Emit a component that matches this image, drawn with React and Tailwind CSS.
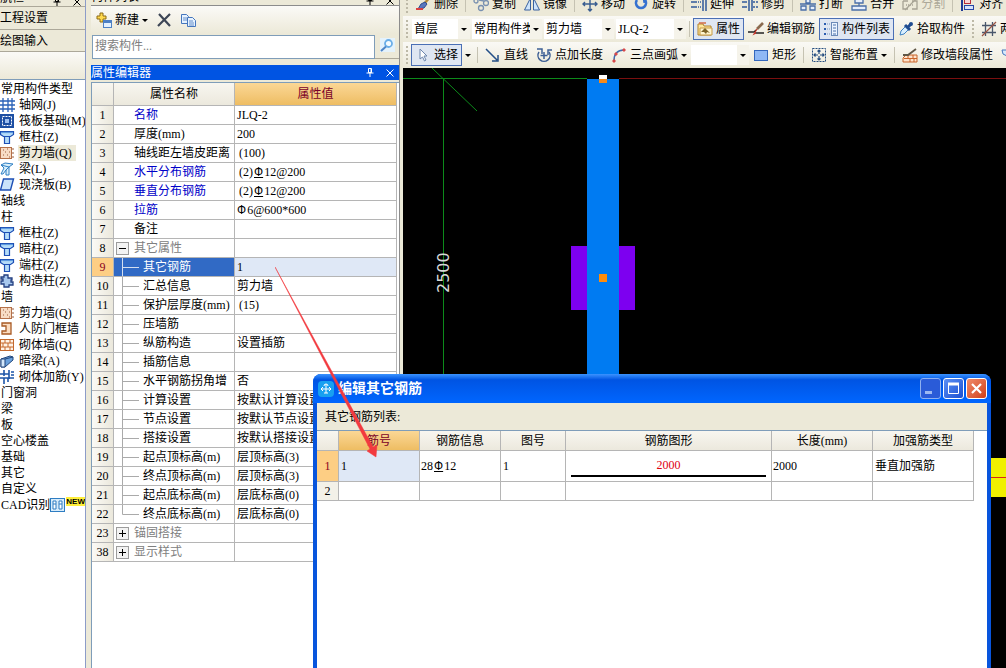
import React, { useState } from "react";

const icons = {
    grid: (
        <g stroke="#2a62b8" fill="none" strokeWidth="1.3">
            <path d="M3 1v14M8 1v14M12 1v14M0 4h15M0 8h15M0 12h15" />
        </g>
    ),
    raft: (
        <g>
            <rect x="0" y="1" width="14" height="14" fill="#1d4fa3" />
            <path d="M2.500 3.500h9v9h-9z" fill="none" stroke="#fff" strokeDasharray="2 1" />
            <rect x="5" y="6" width="4" height="4" fill="#9fc0f0" />
        </g>
    ),
    column: (
        <g fill="#b5dcf8" stroke="#1d4fb5" strokeWidth="1.2">
            <path d="M4.500 7h5v7.500h-5z" />
            <path d="M0.500 2.500h13v3l-3 2h-7l-3-2z" />
            <path d="M1 3.500h12" stroke="#5e9be0" />
        </g>
    ),
    wall: (
        <g>
            <rect x="0.5" y="2.5" width="11" height="11" fill="#f8dcc5" stroke="#b5714a" />
            <path
                d="M3 5h1M7 4h1M5 7h1M9 7h1M3 10h1M7 10h1M9 12h1M13 3v2M13 7v2M13 11v2"
                stroke="#9a5c3a"
            />
        </g>
    ),
    beam: (
        <path
            d="M1 4l4-2 8 1-4 3v8H6V9l-3 4H1l3-6zM1 4l8 2M6 9l3-3"
            fill="#d9effb"
            stroke="#2f7fc4"
        />
    ),
    slab: (
        <path d="M3.5 2h10l-3 11h-10z" fill="#c9e3fa" stroke="#1d4fb5" strokeWidth="1.4" />
    ),
    tieColumn: (
        <path
            d="M4 2h4v3h4v2h-1v2h2v3H9v2H4v-3H1V8h2V6H1V4h3z"
            fill="#a8c8ee"
            stroke="#233f80"
            strokeWidth="1.3"
        />
    ),
    doorWall: (
        <path d="M2 2h9v11H2v-3h4V5H2z" fill="#fbdcc0" stroke="#a85a25" strokeWidth="1.3" />
    ),
    brick: (
        <g stroke="#c4692d" fill="#fff3e6">
            <rect x="0.5" y="2.5" width="13" height="11" />
            <path d="M0 6h14M0 10h14M5 3v3M10 3v3M3 6v4M8 6v4M5 10v4M10 10v4" />
        </g>
    ),
    hiddenBeam: (
        <g stroke="#22477c">
            <path d="M1 6l9-3 3 1v3l-8 7H1z" fill="#6ba1dc" />
            <path d="M1 6h4v8H1z" fill="#d5e8fa" />
            <path d="M5 6l8-2" />
        </g>
    ),
    masonryBar: (
        <path
            d="M0 5h9M4 1v6M9 1v9M0 9h14M4 9v6M8 9v4M11 3h3M11 6h3"
            fill="none"
            stroke="#1d55a8"
            strokeWidth="1.6"
        />
    ),
    create: (
        <g>
            <path d="M4 1h3v3h3v3H7v3H4V7H1V4h3z" fill="#ffd94d" stroke="#8d6a14" />
            <rect x="7.5" y="8.5" width="8" height="7" fill="#e3f1ff" stroke="#4d80c5" />
            <path d="M8 10h7" stroke="#4d80c5" strokeWidth="2" />
        </g>
    ),
    remove: (
        <path d="M3 2l11 12M14 2L2 14" stroke="#3d4656" strokeWidth="2.2" fill="none" />
    ),
    copyDoc: (
        <g fill="#e6f2ff" stroke="#4576bd">
            <path d="M1.500 2.500h5l2 2v7h-7z" />
            <path d="M7.500 5.500h5l3 3v6h-8z" />
            <path d="M3 6h4M3 8h4M9 9h4M9 11h5M9 13h5" strokeWidth="0.8" />
        </g>
    ),
    search: (
        <g fill="none">
            <rect x="1" y="0" width="15" height="14" fill="#e4f2fc" />
            <circle cx="9.500" cy="5.500" r="3.500" strokeWidth="1.800" fill="#f4fbff" stroke="#6aaee8" />
            <path d="M7 8.500l-5 4.500" strokeWidth="2" stroke="#4f86c8" />
        </g>
    ),
    brush: (
        <g>
            <path d="M15 1L9 8" stroke="#b48c3c" strokeWidth="2.500" />
            <path d="M10 6l-4 2-3 5 6-1 3-4z" fill="#5a77bd" stroke="#304c90" />
            <path d="M1 13h7" stroke="#d94141" strokeWidth="2" />
        </g>
    ),
    copy: (
        <g fill="none" stroke="#7890b0" strokeWidth="1.300">
            <circle cx="3" cy="5" r="2" />
            <circle cx="8" cy="12" r="2.500" />
            <circle cx="13" cy="7" r="2.500" />
            <path d="M6 4l5 1" />
        </g>
    ),
    mirror: (
        <g fill="#cde4fb" stroke="#39619e">
            <path d="M6.500 2v12h-6z" />
            <path d="M9.500 2v12h6z" />
        </g>
    ),
    move: (
        <g fill="none" stroke="#375c90" strokeWidth="1.400">
            <path d="M8 1v14M1 8h14M6 3l2-2 2 2M6 13l2 2 2-2M3 6L1 8l2 2M13 6l2 2-2 2" />
        </g>
    ),
    rotate: (
        <g fill="none" stroke="#3672d0" strokeWidth="2.600">
            <path d="M4 4a5 5 0 1 0 8 0" />
            <path d="M10 2l4 1-3 4z" fill="#3672d0" strokeWidth="1" />
        </g>
    ),
    extend: (
        <g stroke="#315a9b" strokeWidth="1.500" fill="none">
            <path d="M0 6h6M0 11h6" />
            <path d="M7 6h4M7 11h4" strokeDasharray="1 1" />
            <path d="M12 1v14M15 1v14" />
        </g>
    ),
    trim: (
        <g stroke="#315a9b" strokeWidth="1.500" fill="none">
            <path d="M0 6h5M0 11h5M7 1v14M10 1v14" />
            <path d="M11 6h5M11 11h5" strokeDasharray="2 1" />
        </g>
    ),
    split: (
        <g stroke="#4a6fa8" fill="#e6eefb" strokeWidth="1.300">
            <path d="M1 10h5v4H1zM10 10h5v4h-5zM6 4v3h4V4M0 8h16" />
        </g>
    ),
    merge: (
        <g stroke="#4a6fa8" fill="#e6eefb" strokeWidth="1.300">
            <path d="M4 3h8v4H4zM1 10h14v4H1zM8 7v3" />
        </g>
    ),
    cut: (
        <g stroke="#a6a394" fill="none" strokeWidth="1.300">
            <path d="M1 5h5M1 5v8h5M10 5h5v8h-5M3 14L14 3" />
            <path d="M4 9h8" strokeDasharray="1 1" />
        </g>
    ),
    align: (
        <g>
            <path d="M2 1v14" stroke="#203a94" strokeWidth="2" />
            <rect x="4.500" y="3.500" width="6" height="4" fill="#f8d6d6" stroke="#b82d3a" />
            <rect x="4.500" y="9.500" width="9" height="4" fill="#d7e3fb" stroke="#2747a5" />
        </g>
    ),
    property: (
        <g>
            <path d="M1 3h5l1 2h7v9H1z" fill="#ffe79c" stroke="#b3832d" />
            <path d="M3 7h12v7H3z" fill="#fff4ce" stroke="#c69a45" />
            <path d="M4 11l4-4 5 5-3-1-1 2-2-2z" fill="#7e6427" />
            <path d="M2 2h7" stroke="#d36b46" strokeWidth="1.500" />
        </g>
    ),
    editBar: (
        <g fill="none">
            <path d="M0 11h6l2-2M7 12h9" stroke="#222" strokeWidth="1.300" />
            <path d="M15 2L9 8" stroke="#8a6a4f" strokeWidth="2.600" />
            <path d="M9 8l-3 5 2-1" stroke="#c6362b" strokeWidth="1.200" />
        </g>
    ),
    list: (
        <g>
            <path d="M1 3h2M1 8h2M1 13h2" stroke="#2b5db0" strokeWidth="2" />
            <path d="M4 3h3M4 8h3M4 13h3" stroke="#7795bd" strokeDasharray="1 1" />
            <rect x="8.500" y="1.500" width="6" height="13" fill="#eaf3ff" stroke="#6b8ab8" />
            <path d="M10 4h3M10 7h3M10 10h3M10 13h3" stroke="#4b71ab" />
        </g>
    ),
    picker: (
        <g>
            <path d="M2 14l1-4 5-5 3 3-5 5z" fill="#d9efff" stroke="#3f83c4" />
            <path d="M7 4l5 5M10 6l3-3" stroke="#1f4c91" strokeWidth="3" />
            <circle cx="13" cy="3" r="2" fill="#1f4c91" />
        </g>
    ),
    axis: (
        <g stroke="#49576c" fill="none" strokeWidth="1.300">
            <path d="M4.500 1v14M11.500 1v14M1 4.500h14M1 11.500h14" />
            <path d="M1 15L15 1" stroke="#9a5343" />
        </g>
    ),
    cursor: (
        <path d="M5 2v10l2.500-2 2 4 1.500-1-2-4h3z" fill="#fff" stroke="#6d86ad" />
    ),
    line: (
        <path
            d="M1 2l11 11M13 8v6H7"
            fill="none"
            stroke="#244f87"
            strokeWidth="1.500"
        />
    ),
    pointLength: (
        <g fill="none" stroke="#3d5f95" strokeWidth="1.500">
            <path d="M3 5a6 6 0 1 0 10 0M8 5v7M4.500 8.500h7" />
            <path d="M1 2h5v5M12 8V3h4" />
        </g>
    ),
    arc: (
        <g>
            <path d="M3 14C3 7 6 3 13 3" fill="none" stroke="#3d6bad" strokeWidth="1.500" />
            <path d="M2 13h2v2H2zM4 6h2v2H4zM12 2h2v2h-2z" stroke="#d8494b" fill="#d8494b" />
        </g>
    ),
    rect: (
        <rect x="1.500" y="3.500" width="13" height="10" fill="#8fb8f5" stroke="#3467bd" />
    ),
    smart: (
        <g fill="none" stroke="#254d80">
            <rect x="1.500" y="1.500" width="13" height="13" strokeDasharray="2 1" />
            <path
                d="M8 3v4M8 9v4M3 8h4M9 8h4M6.500 4.500L8 3l1.500 1.500M6.500 11.500L8 13l1.500-1.500M4.500 6.500L3 8l1.500 1.500M11.500 6.500L13 8l-1.500 1.500"
                strokeWidth="1.200"
            />
        </g>
    ),
    editWall: (
        <g>
            <path d="M4 8h11v7H1v-4z" fill="#ffe3cb" stroke="#c9642a" />
            <path d="M2 11.500h13M6 8v3M11 8v3M8 12v3M12 12v3" stroke="#c9642a" />
            <path d="M1 8h5l8-6" stroke="#5f5747" strokeWidth="1.800" fill="none" />
        </g>
    ),
    funnel: <path d="M1 3h13v3l-4 3v5H6V9L2 7z" fill="#d9e9fb" stroke="#4576bd" />,
    recognize: (
        <g>
            <rect x="0.500" y="1.500" width="14" height="13" fill="#d8ecfb" stroke="#2e7dc2" />
            <path d="M3 4h3v8H3zM9 4h3v8H9z" fill="#fff" stroke="#2e7dc2" />
            <path d="M3 7h3M9 7h3" stroke="#2e7dc2" />
        </g>
    ),
};

function Icon({ name }) {
    return (
        <svg width="16" height="16" viewBox="0 0 16 16" className="shrink-0" aria-hidden="true">
            {icons[name]}
        </svg>
    );
}

function Caret() {
    return (
        <svg width="6" height="3" viewBox="0 0 6 3" className="shrink-0" aria-hidden="true">
            <path d="M0 0h6L3 3z" fill="#000" />
        </svg>
    );
}

function PinClose() {
    return (
        <span className="flex items-center gap-3">
            <svg width="8" height="9" viewBox="0 0 8 9" stroke="currentColor" fill="none" aria-hidden="true">
                <path d="M2.500 0.500h3v4h-3zM0.500 5h7M4 5v4M5 1v4" />
            </svg>
            <svg width="8" height="8" viewBox="0 0 8 8" stroke="currentColor" fill="none" aria-hidden="true">
                <path d="M0.500 0.500l7 7M7.500 0.500l-7 7" />
            </svg>
        </span>
    );
}

const buttonStates = {
    active: "border-[#4a6fb5] bg-[#dfe6f2]",
    normal: "border-transparent",
    disabled: "border-transparent text-[#aca899]",
};

function Tool({ icon, label, state = "normal", caret }) {
    return (
        <button
            disabled={state === "disabled"}
            aria-label={label || icon}
            className={`flex h-[22px] shrink-0 items-center gap-[3px] border px-[3px] ${buttonStates[state]}`}
        >
            <Icon name={icon} />
            {label && <span>{label}</span>}
            {caret && <Caret />}
        </button>
    );
}

function Sep() {
    return <span className="mx-[3px] h-4 w-px shrink-0 bg-[#c5c2b2]" />;
}

function Grip() {
    return <span className="mx-[3px] h-[18px] shrink-0 border-l-2 border-dotted border-[#bdb9a7]" />;
}

function Combo({ label, options, width }) {
    return (
        <span className={`relative flex h-5 shrink-0 items-center bg-white ${width}`}>
            <select aria-label={label} className="h-5 w-full appearance-none bg-white pr-3 pl-[2px] outline-none">
                {options.map(o => (
                    <option key={o}>{o}</option>
                ))}
            </select>
            <span className="pointer-events-none absolute inset-y-0 right-0 flex w-3 items-center justify-center bg-[#f5f3ea]">
                <Caret />
            </span>
        </span>
    );
}

// rebar grade marks: HPB plain, HRB with a bar under it
function Rebar({ text }) {
    return text.split(/([ABC])(?=\d)/).map((part, i) => {
        if (part === "A") return <span key={i} className="mr-px font-['Liberation_Sans'] text-[12px]">Ф</span>;
        if (part === "C") return <span key={i} className="mx-px font-['Liberation_Sans'] text-[12px] underline">Ф</span>;
        return part;
    });
}

const tree = [
    { label: "常用构件类型" },
    { label: "轴网(J)", icon: "grid" },
    { label: "筏板基础(M)", icon: "raft" },
    { label: "框柱(Z)", icon: "column" },
    { label: "剪力墙(Q)", icon: "wall", selected: true },
    { label: "梁(L)", icon: "beam" },
    { label: "现浇板(B)", icon: "slab" },
    { label: "轴线" },
    { label: "柱" },
    { label: "框柱(Z)", icon: "column" },
    { label: "暗柱(Z)", icon: "column" },
    { label: "端柱(Z)", icon: "column" },
    { label: "构造柱(Z)", icon: "tieColumn" },
    { label: "墙" },
    { label: "剪力墙(Q)", icon: "wall" },
    { label: "人防门框墙", icon: "doorWall" },
    { label: "砌体墙(Q)", icon: "brick" },
    { label: "暗梁(A)", icon: "hiddenBeam" },
    { label: "砌体加筋(Y)", icon: "masonryBar" },
    { label: "门窗洞" },
    { label: "梁" },
    { label: "板" },
    { label: "空心楼盖" },
    { label: "基础" },
    { label: "其它" },
    { label: "自定义" },
    { label: "CAD识别", badge: true },
];

const properties = [
    { no: 1, name: "名称", value: "JLQ-2", type: "key" },
    { no: 2, name: "厚度(mm)", value: "200" },
    { no: 3, name: "轴线距左墙皮距离", value: "(100)", pad: true },
    { no: 4, name: "水平分布钢筋", value: "(2)C12@200", type: "key", pad: true },
    { no: 5, name: "垂直分布钢筋", value: "(2)C12@200", type: "key", pad: true },
    { no: 6, name: "拉筋", value: "A6@600*600", type: "key" },
    { no: 7, name: "备注", value: "" },
    { no: 8, name: "其它属性", value: "", type: "group", open: true },
    { no: 9, name: "其它钢筋", value: "1", type: "child" },
    { no: 10, name: "汇总信息", value: "剪力墙", type: "child" },
    { no: 11, name: "保护层厚度(mm)", value: "(15)", type: "child", pad: true },
    { no: 12, name: "压墙筋", value: "", type: "child" },
    { no: 13, name: "纵筋构造", value: "设置插筋", type: "child" },
    { no: 14, name: "插筋信息", value: "", type: "child" },
    { no: 15, name: "水平钢筋拐角增", value: "否", type: "child" },
    { no: 16, name: "计算设置", value: "按默认计算设置", type: "child" },
    { no: 17, name: "节点设置", value: "按默认节点设置", type: "child" },
    { no: 18, name: "搭接设置", value: "按默认搭接设置", type: "child" },
    { no: 19, name: "起点顶标高(m)", value: "层顶标高(3)", type: "child" },
    { no: 20, name: "终点顶标高(m)", value: "层顶标高(3)", type: "child" },
    { no: 21, name: "起点底标高(m)", value: "层底标高(0)", type: "child" },
    { no: 22, name: "终点底标高(m)", value: "层底标高(0)", type: "child", last: true },
    { no: 23, name: "锚固搭接", value: "", type: "group" },
    { no: 38, name: "显示样式", value: "", type: "group" },
];

function Navigator() {
    return (
        <aside className="flex w-[86px] shrink-0 flex-col overflow-hidden border-r border-[#8c9cc8]">
            <div className="flex h-[7px] shrink-0 items-end justify-between overflow-hidden border-b border-[#aca899] pr-1">
                <span className="leading-4">航栏</span>
                <PinClose />
            </div>
            <button className="h-[23px] shrink-0 border-b border-[#aca899] bg-[#ece9d8] text-left">工程设置</button>
            <button className="h-[22px] shrink-0 border-b border-[#aca899] bg-[#ece9d8] text-left">绘图输入</button>
            <div className="h-[27px] shrink-0 bg-linear-to-b from-[#fbfaf7] to-[#ece9d8]" />
            <ul className="flex-1 border-t border-[#7f9db9] bg-white pt-px">
                {tree.map((item, i) => (
                    <li key={i} className="flex h-4 items-center whitespace-nowrap leading-4">
                        {item.icon && (
                            <span className="flex w-[18px] shrink-0">
                                <Icon name={item.icon} />
                            </span>
                        )}
                        <span className={item.selected ? "bg-[#ece9d8] px-px pr-1" : "pl-px"}>{item.label}</span>
                        {item.badge && (
                            <span className="flex items-start">
                                <Icon name="recognize" />
                                <b className="bg-[#ffef3a] font-['Liberation_Sans'] text-[8px] leading-[9px]">NEW</b>
                            </span>
                        )}
                    </li>
                ))}
            </ul>
        </aside>
    );
}

function NameCell({ row, selected }) {
    if (row.type === "child") {
        return (
            <span className="flex h-[18px] items-center">
                <svg width="29" height="19" viewBox="0 0 29 19" className="shrink-0" stroke={selected ? "#d5dff0" : "#aaa"} aria-hidden="true">
                    <path d={row.last ? "M8.5 0v9.5H25" : "M8.5 0v19M8.5 9.5H25"} fill="none" />
                </svg>
                {row.name}
            </span>
        );
    }
    if (row.type === "group") {
        return (
            <span className="flex h-[18px] items-center gap-[5px] pl-[2px] text-[#808080]">
                <button aria-label={row.name} className="flex size-[13px] items-center justify-center border border-[#9c9c9c] bg-[#f3f3f3]">
                    <svg width="7" height="7" viewBox="0 0 7 7" stroke="#000" aria-hidden="true">
                        <path d={row.open ? "M0 3.5h7" : "M0 3.5h7M3.5 0v7"} />
                    </svg>
                </button>
                {row.name}
            </span>
        );
    }
    return <span className={`block pl-5 ${row.type === "key" ? "text-[#0000c8]" : ""}`}>{row.name}</span>;
}

function PropertyPanel() {
    const [selected, setSelected] = useState(9);
    const [query, setQuery] = useState("");

    return (
        <section className="ml-[5px] flex w-[309px] shrink-0 flex-col border-r border-[#8c8c8c]">
            <div className="flex h-[6px] shrink-0 items-end justify-between overflow-hidden border-b border-[#8c8c8c] pr-[5px]">
                <span className="leading-4">构件列表</span>
                <PinClose />
            </div>
            <div className="flex h-[28px] shrink-0 items-center bg-linear-to-b from-[#fbfaf7] to-[#ece9d8] pl-px">
                <Tool icon="create" label="新建" caret />
                <Tool icon="remove" />
                <Tool icon="copyDoc" />
            </div>
            <div className="flex h-[25px] shrink-0 items-center pl-px">
                <input
                    aria-label="搜索构件"
                    placeholder="搜索构件..."
                    value={query}
                    onChange={e => setQuery(e.target.value)}
                    className="h-[24px] min-w-0 flex-1 border border-[#7f9db9] bg-white px-[2px] placeholder:text-[#808080] outline-none"
                />
                <button aria-label="搜索" className="flex h-[24px] w-[24px] items-center justify-center border-b border-[#aca899]">
                    <Icon name="search" />
                </button>
            </div>
            <div className="mt-[6px] flex h-[15px] shrink-0 items-center justify-between bg-[#0054e3] pr-[5px] text-white">
                <h2>属性编辑器</h2>
                <PinClose />
            </div>
            <div className="mt-[2px] flex-1 border-t border-l border-[#7f9db9] bg-white pr-[2px]">
                <table className="w-full table-fixed border-separate border-spacing-0">
                    <colgroup>
                        <col className="w-[22px]" />
                        <col className="w-[121px]" />
                        <col />
                    </colgroup>
                    <thead>
                        <tr className="h-[23px] bg-linear-to-b from-[#f8f6f0] to-[#ebe8dc]">
                            <th className="border-r border-b border-[#b5b5b5]" />
                            <th className="border-r border-b border-[#b5b5b5] font-normal">属性名称</th>
                            <th className="border-r border-b border-[#b5b5b5] bg-linear-to-b from-[#fbd795] to-[#eebd62] font-normal text-[#7a0028]">
                                属性值
                            </th>
                        </tr>
                    </thead>
                    <tbody>
                        {properties.map(row => {
                            const active = row.no === selected;
                            return (
                                <tr key={row.no} className="h-[19px] leading-[18px]" onClick={() => setSelected(row.no)}>
                                    <td
                                        className={`border-r border-b border-[#b5b5b5] p-0 text-center ${
                                            active ? "bg-[#fdce84] text-[#8b0020]" : "bg-linear-to-r from-[#fbfaf6] to-[#ebe8dc]"
                                        }`}
                                    >
                                        {row.no}
                                    </td>
                                    <td
                                        className={`overflow-hidden border-r border-b border-[#b5b5b5] p-0 whitespace-nowrap ${
                                            active ? "bg-[#316ac5] text-white" : ""
                                        }`}
                                    >
                                        <NameCell row={row} selected={active} />
                                    </td>
                                    <td
                                        className={`overflow-hidden border-r border-b border-[#b5b5b5] py-0 pr-0 whitespace-nowrap ${
                                            row.pad ? "pl-1" : "pl-[2px]"
                                        } ${active ? "bg-[#dfe8f6]" : ""}`}
                                    >
                                        <Rebar text={row.value} />
                                    </td>
                                </tr>
                            );
                        })}
                    </tbody>
                </table>
            </div>
        </section>
    );
}

function Toolbars() {
    return (
        <div className="shrink-0 whitespace-nowrap">
            <div className="h-[16px] overflow-hidden">
                <div className="-mt-[9px] flex h-[26px] items-center">
                    <Grip />
                    <Tool icon="brush" label="删除" />
                    <Sep />
                    <Tool icon="copy" label="复制" />
                    <Tool icon="mirror" label="镜像" />
                    <Sep />
                    <Tool icon="move" label="移动" />
                    <Tool icon="rotate" label="旋转" />
                    <Sep />
                    <Tool icon="extend" label="延伸" />
                    <Tool icon="trim" label="修剪" />
                    <Sep />
                    <Tool icon="split" label="打断" />
                    <Tool icon="merge" label="合并" />
                    <Tool icon="cut" label="分割" state="disabled" />
                    <Sep />
                    <Tool icon="align" label="对齐" caret />
                </div>
            </div>
            <div className="flex h-[26px] items-center bg-linear-to-b from-[#faf9f5] to-[#ece9d8]">
                <Grip />
                <div className="flex shrink-0 gap-[2px] pl-px">
                    <Combo label="楼层" options={["首层"]} width="w-[58px]" />
                    <Combo label="构件分类" options={["常用构件类型"]} width="w-[70px]" />
                    <Combo label="构件类型" options={["剪力墙"]} width="w-[70px]" />
                    <Combo label="构件" options={["JLQ-2"]} width="w-[70px]" />
                </div>
                <Sep />
                <Tool icon="property" label="属性" state="active" />
                <Tool icon="editBar" label="编辑钢筋" />
                <Tool icon="list" label="构件列表" state="active" />
                <Tool icon="picker" label="拾取构件" />
                <Grip />
                <Tool icon="axis" label="两点" />
            </div>
            <div className="flex h-[26px] items-center bg-linear-to-b from-[#faf9f5] to-[#ece9d8]">
                <Grip />
                <Tool icon="cursor" label="选择" state="active" />
                <button aria-label="选择方式" className="flex h-5 w-3 shrink-0 items-center justify-center">
                    <Caret />
                </button>
                <Sep />
                <Tool icon="line" label="直线" />
                <Tool icon="pointLength" label="点加长度" />
                <Tool icon="arc" label="三点画弧" caret />
                <Combo label="半径" options={[""]} width="w-[58px]" />
                <Tool icon="rect" label="矩形" />
                <Sep />
                <Tool icon="smart" label="智能布置" caret />
                <Sep />
                <Tool icon="editWall" label="修改墙段属性" />
                <Tool icon="funnel" />
            </div>
        </div>
    );
}

function Drawing() {
    return (
        <svg className="min-h-0 w-full flex-1 bg-black" role="img" aria-label="JLQ-2">
            <path d="M0 10.5h184M40.5 10.500V600" stroke="#0c8a1a" fill="none" />
            <path d="M29 0l45 43" stroke="#0c8a1a" fill="none" />
            <path d="M216 10.500h600" stroke="#7a0f0f" />
            <rect x="168" y="178" width="64" height="64" fill="#7d00f0" />
            <rect x="184" y="11" width="32" height="600" fill="#007bf2" />
            <rect x="196" y="7" width="8" height="4" fill="#fff" />
            <rect x="196" y="11" width="8" height="4" fill="#f58a1c" />
            <rect x="196" y="206" width="8" height="8" fill="#ff8c0a" />
            <text x="46" y="225" transform="rotate(-90 46 225)" fill="#d8d8d8" fontSize="16" fontFamily="DejaVu Sans">
                2500
            </text>
            <rect x="580" y="390" width="200" height="39" fill="#f0f000" />
            <path d="M580 409.500h200" stroke="#d92a10" />
        </svg>
    );
}

const headers = ["筋号", "钢筋信息", "图号", "钢筋图形", "长度(mm)", "加强筋类型"];

function RebarDialog() {
    return (
        <div
            role="dialog"
            aria-label="编辑其它钢筋"
            className="absolute top-[374px] right-[15px] bottom-0 left-[313px] flex flex-col rounded-t-lg border-x-4 border-[#0855dd] bg-[#0855dd]"
        >
            <div className="-mx-1 flex h-[29px] shrink-0 items-center gap-1 rounded-t-lg bg-linear-to-b from-[#3a93ff] via-[#0054e3] via-20% to-[#0066ff] pr-1 pl-[5px] text-white">
                <span className="flex size-4 items-center justify-center rounded-sm bg-[#18a0f0]">
                    <svg width="12" height="12" viewBox="0 0 12 12" fill="none" stroke="#fff" aria-hidden="true">
                        <path d="M6 1v9M1 6h10M4 3a2 2 0 0 1 4 0M3 4L1 6l2 2M9 4l2 2-2 2M4 10h4" />
                    </svg>
                </span>
                <h1 className="flex-1 text-[14px] font-bold">编辑其它钢筋</h1>
                <div className="flex gap-[2px]">
                    <button aria-label="最小化" className="size-[21px] rounded-[3px] border border-[#8fb0f0] bg-[#2a5bd8]">
                        <svg viewBox="0 0 19 19" aria-hidden="true">
                            <path d="M4 13.500h7" stroke="#9db9f2" strokeWidth="3" />
                        </svg>
                    </button>
                    <button aria-label="最大化" className="size-[21px] rounded-[3px] border border-white bg-linear-to-br from-[#5c8ff5] to-[#1c4fd0]">
                        <svg viewBox="0 0 19 19" fill="none" stroke="#fff" aria-hidden="true">
                            <path d="M4.500 5v9.500h10V5" />
                            <path d="M4 5h11" strokeWidth="3" />
                        </svg>
                    </button>
                    <button aria-label="关闭" className="size-[21px] rounded-[3px] border border-white bg-linear-to-br from-[#f08a68] to-[#cf3d14]">
                        <svg viewBox="0 0 19 19" stroke="#fff" strokeWidth="2.200" aria-hidden="true">
                            <path d="M5 5l9 9M14 5l-9 9" />
                        </svg>
                    </button>
                </div>
            </div>
            <div className="flex h-[27px] shrink-0 items-center bg-[#ece9d8] pl-2">其它钢筋列表:</div>
            <div className="flex-1 border-t border-[#7f9db9] bg-white pr-[13px]">
                <table className="w-full table-fixed border-separate border-spacing-0">
                    <colgroup>
                        <col className="w-[22px]" />
                        <col className="w-[81px]" />
                        <col className="w-[81px]" />
                        <col className="w-[65px]" />
                        <col />
                        <col className="w-[101px]" />
                        <col className="w-[101px]" />
                    </colgroup>
                    <thead>
                        <tr className="h-[20px] bg-linear-to-b from-[#f8f6f0] to-[#ebe8dc]">
                            <th className="border-r border-b border-[#b5b5b5]" />
                            {headers.map((h, i) => (
                                <th
                                    key={h}
                                    className={`border-r border-b border-[#b5b5b5] p-0 font-normal ${
                                        i === 0 ? "bg-linear-to-b from-[#fbd795] to-[#eebd62] text-[#7a0028]" : ""
                                    }`}
                                >
                                    {h}
                                </th>
                            ))}
                        </tr>
                    </thead>
                    <tbody>
                        <tr className="h-[31px]">
                            <td className="border-r border-b border-[#b5b5b5] bg-[#fdce84] p-0 text-center text-[#8b0020]">1</td>
                            <td className="border-r border-b border-[#b5b5b5] bg-[#dfe8f6] px-[2px] py-0">1</td>
                            <td className="border-r border-b border-[#b5b5b5] px-px py-0">
                                <Rebar text="28C12" />
                            </td>
                            <td className="border-r border-b border-[#b5b5b5] px-[2px] py-0">1</td>
                            <td className="border-r border-b border-[#b5b5b5] px-[5px] py-0 text-center text-[#e00010]">
                                <span className="block border-b-2 border-black leading-5">2000</span>
                            </td>
                            <td className="border-r border-b border-[#b5b5b5] px-px py-0">2000</td>
                            <td className="border-r border-b border-[#b5b5b5] px-[2px] py-0">垂直加强筋</td>
                        </tr>
                        <tr className="h-[19px]">
                            <td className="border-r border-b border-[#b5b5b5] bg-[#f3f1e8] p-0 text-center">2</td>
                            {headers.map(h => (
                                <td key={h} className="border-r border-b border-[#b5b5b5] p-0" />
                            ))}
                        </tr>
                    </tbody>
                </table>
            </div>
        </div>
    );
}

export default function App() {
    return (
        <div className="relative flex h-screen overflow-hidden bg-[#ece9d8] font-['Liberation_Serif','Noto_Sans_CJK_SC',serif] text-[12px] leading-4 text-black">
            <Navigator />
            <PropertyPanel />
            <main className="ml-[3px] flex min-w-0 flex-1 flex-col overflow-hidden">
                <Toolbars />
                <Drawing />
            </main>
            <RebarDialog />
            {/* pointer from the property row to the dialog's first cell */}
            <svg className="pointer-events-none absolute top-[267px] left-[275px]" width="104" height="192" aria-hidden="true">
                <path d="M0 0L98 180l4-2-1 12-9-6 3-2z" fill="#f23a3f" stroke="#f23a3f" strokeWidth="0.500" />
            </svg>
        </div>
    );
}
